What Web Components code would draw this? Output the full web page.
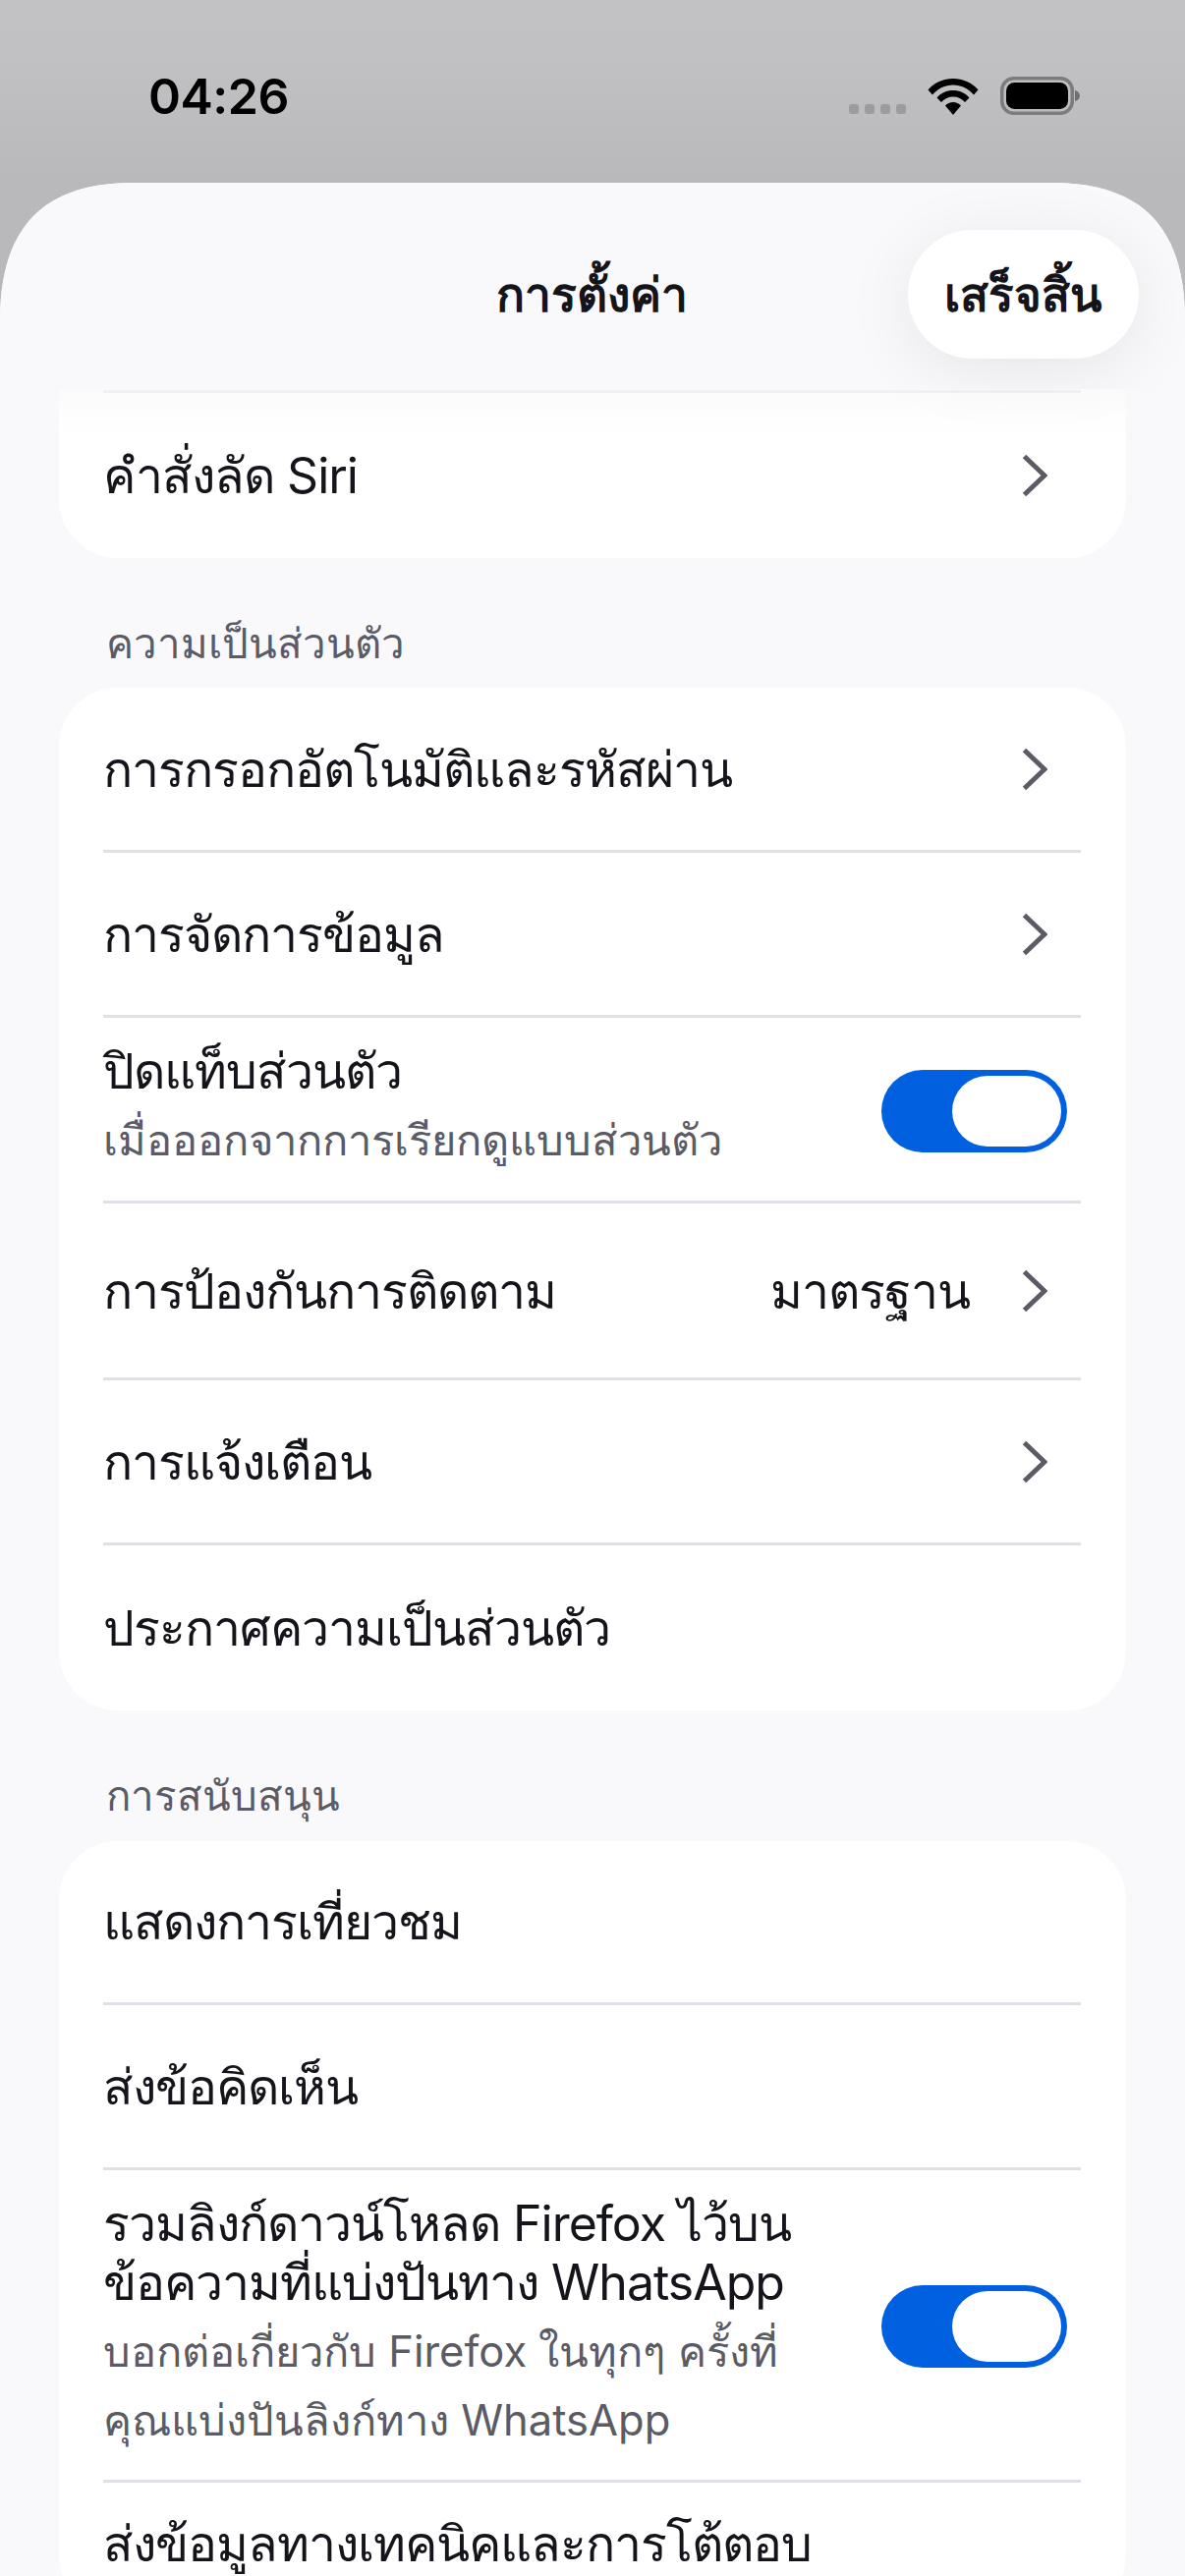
<!DOCTYPE html>
<html lang="th">
<head>
<meta charset="utf-8">
<title>การตั้งค่า</title>
<style>
  html, body { margin: 0; padding: 0; height: 2622px; overflow: hidden; }
  body {
    display: flex;
    flex-direction: column;
    background: linear-gradient(#c2c2c4, #c1c1c3 60px, #b9b9bb 186px, #b9b9bb 320px);
    font-family: Inter, "Noto Sans", "Liberation Sans", sans-serif;
    color: #15141a;
  }
</style>
</head>
<body>
<status-bar time="04:26"></status-bar>
<settings-sheet>
  <nav-header slot="header" title="การตั้งค่า" action="เสร็จสิ้น"></nav-header>
  <settings-card cut>
    <settings-row h="1"></settings-row>
    <settings-row h="168" chevron title="คำสั่งลัด Siri"></settings-row>
  </settings-card>
  <section-label>ความเป็นส่วนตัว</section-label>
  <settings-card>
    <settings-row h="165" chevron title="การกรอกอัตโนมัติและรหัสผ่าน"></settings-row>
    <settings-row h="165" chevron title="การจัดการข้อมูล"></settings-row>
    <settings-row h="186" toggle title="ปิดแท็บส่วนตัว" sub="เมื่อออกจากการเรียกดูแบบส่วนตัว"></settings-row>
    <settings-row h="177" chevron title="การป้องกันการติดตาม" value="มาตรฐาน"></settings-row>
    <settings-row h="165" chevron title="การแจ้งเตือน"></settings-row>
    <settings-row h="168" title="ประกาศความเป็นส่วนตัว"></settings-row>
  </settings-card>
  <section-label style="height:133px">การสนับสนุน</section-label>
  <settings-card>
    <settings-row h="164" title="แสดงการเที่ยวชม"></settings-row>
    <settings-row h="165" title="ส่งข้อคิดเห็น"></settings-row>
    <settings-row h="315" toggle title="รวมลิงก์ดาวน์โหลด Firefox ไว้บน<br>ข้อความที่แบ่งปันทาง WhatsApp" sub="บอกต่อเกี่ยวกับ Firefox ในทุกๆ ครั้งที่<br>คุณแบ่งปันลิงก์ทาง WhatsApp"></settings-row>
    <settings-row h="134" top title="ส่งข้อมูลทางเทคนิคและการโต้ตอบ"></settings-row>
  </settings-card>
</settings-sheet>

<script>
const define = (name, css, html) => {
  customElements.define(name, class extends HTMLElement {
    constructor() {
      super();
      this.attachShadow({ mode: 'open' });
    }
    connectedCallback() {
      const a = (k) => this.getAttribute(k);
      this.shadowRoot.innerHTML = `<style>${css}</style>${typeof html === 'function' ? html(a, this) : html}`;
    }
  });
};

define('status-bar', `
  :host { display: flex; align-items: flex-start; height: 186px; flex: none; box-sizing: border-box; padding: 0 106px 0 151px; }
  .time { font: 600 50px/1 Inter, "Liberation Sans", sans-serif; color: #000; margin-top: 73px; letter-spacing: -0.5px; }
  .icons { margin-left: auto; margin-top: 78px; display: flex; align-items: flex-start; }
  .dots { display: flex; gap: 6px; margin-top: 28px; }
  .dots i { width: 10px; height: 10px; border-radius: 3px; background: #9c9c9e; }
  .wifi { width: 52px; height: 38px; margin: 1px 0 0 22px; }
  .bat { width: 82px; height: 39px; margin-left: 22px; }
`, (a) => `
  <div class="time">${a('time')}</div>
  <div class="icons">
    <div class="dots"><i></i><i></i><i></i><i></i></div>
    <svg class="wifi" viewBox="0 0 52 38">
      <path d="M0.5 12.5C7 5 16 1 26 1s19 4 25.5 11.500L47 17.500C41.500 11 34 7.500 26 7.500S10.500 11 5 17.500Z"/>
      <path d="M9.500 20.500C13.500 15.500 19.500 13 26 13s12.500 2.500 16.500 7.500L38 25c-3-3.500-7.200-5.500-12-5.500S17 21.500 14 25Z"/>
      <path d="M18 28.500C20 26.200 23 25 26 25s6 1.200 8 3.500L26 38Z"/>
    </svg>
    <svg class="bat" viewBox="0 0 82 39">
      <rect x="1.750" y="1.750" width="71.500" height="35.500" rx="12" fill="none" stroke="#7c7c7e" stroke-width="3.500"/>
      <rect x="6" y="6" width="63" height="27" rx="8.500" fill="#000"/>
      <path d="M76 14c3 .8 5 3 5 5.500s-2 4.700-5 5.500Z" fill="#6f6f71"/>
    </svg>
  </div>
`);

define('settings-sheet', `
  :host {
    display: flex; flex-direction: column; flex: 1; min-height: 0; position: relative; overflow: hidden; background: #f9f9fb;
    clip-path: path("M0 140C0 50 40 0 135 0L1071 0C1166 0 1206 50 1206 140L1206 2436L0 2436Z");
  }
  .body { display: flex; flex-direction: column; padding: 0 60px; }
`, `<slot name="header"></slot><div class="body"><slot></slot></div>`);

define('nav-header', `
  :host { display: flex; flex: none; height: 210px; position: relative; z-index: 2; background: #f9f9fb; justify-content: center; }
  :host::after { content: ""; position: absolute; left: 0; right: 0; top: 100%; height: 46px; background: linear-gradient(rgba(249,249,251,.7), rgba(249,249,251,0)); pointer-events: none; }
  .title { font: 700 48px/1 Inter, "Noto Sans", "Liberation Sans", sans-serif; margin-top: 90px; padding-right: 1px; }
  button {
    position: absolute; right: 47px; top: 48px; width: 235px; height: 131px; border: 0; border-radius: 66px; background: #fff;
    font: 700 47.500px/1 Inter, "Noto Sans", "Liberation Sans", sans-serif; color: #15141a; padding: 0 2px 0 0;
    box-shadow: 0 12px 70px rgba(0,0,0,.08);
  }
`, (a) => `<div class="title">${a('title')}</div><button>${a('action')}</button>`);

define('settings-card', `
  :host { display: flex; flex-direction: column; background: #fff; border-radius: 60px; overflow: hidden; }
  :host([cut]) { border-radius: 0 0 60px 60px; }
`, `<slot></slot>`);

define('section-label', `
  :host { display: block; height: 132px; box-sizing: border-box; padding: 62px 0 0 48px; font: 400 42px/1.2 Inter, "Noto Sans", "Liberation Sans", sans-serif; color: #5b5b66; }
`, `<slot></slot>`);

define('toggle-switch', `
  :host { display: block; flex: none; width: 189px; height: 84px; box-sizing: border-box; padding: 6px; border-radius: 42px; background: #0060df; }
  i { display: block; width: 111px; height: 72px; margin-left: 66px; border-radius: 36px; background: #fff; }
`, `<i></i>`);

define('chevron-icon', `
  :host { display: block; flex: none; width: 26px; height: 44px; }
  svg { display: block; }
`, `<svg width="26" height="44" viewBox="0 0 26 44"><path d="M2.500 2.500 23 22 2.500 41.500" fill="none" stroke="#5b5b66" stroke-width="5"/></svg>`);

define('settings-row', `
  :host { display: block; flex: none; padding: 0 46px 0 45px; }
  .in { display: flex; align-items: center; border-bottom: 3px solid #e0e0e6; }
  :host(:last-child) .in { border-bottom: 0; }
  :host([top]) .in { align-items: flex-start; box-sizing: border-box; padding-top: 32px; }
  .text { flex: 1; min-width: 0; }
  .text.two { padding-bottom: 3px; }
  .t { font: 400 50px/60px Inter, "Noto Sans", "Liberation Sans", sans-serif; letter-spacing: -1px; color: #15141a; white-space: nowrap; }
  .s { font: 400 43.500px/70px Inter, "Noto Sans", "Liberation Sans", sans-serif; color: #5b5b66; margin-top: 5px; white-space: nowrap; }
  .v { font: 400 50px/60px Inter, "Noto Sans", "Liberation Sans", sans-serif; letter-spacing: -1px; color: #15141a; margin-right: 53px; }
  chevron-icon { margin-right: 34px; }
  toggle-switch { margin: 3px 14px 0 40px; }
`, (a, el) => {
  const title = a('title');
  if (!title) return `<div class="in" style="height:${a('h')}px"></div>`;
  return `<div class="in" style="height:${a('h')}px">
    <div class="text ${a('sub') ? 'two' : ''}">
      <div class="t">${title}</div>
      ${a('sub') ? `<div class="s">${a('sub')}</div>` : ''}
    </div>
    ${a('value') ? `<div class="v">${a('value')}</div>` : ''}
    ${el.hasAttribute('chevron') ? '<chevron-icon></chevron-icon>' : ''}
    ${el.hasAttribute('toggle') ? '<toggle-switch></toggle-switch>' : ''}
  </div>`;
});
</script>
</body>
</html>
